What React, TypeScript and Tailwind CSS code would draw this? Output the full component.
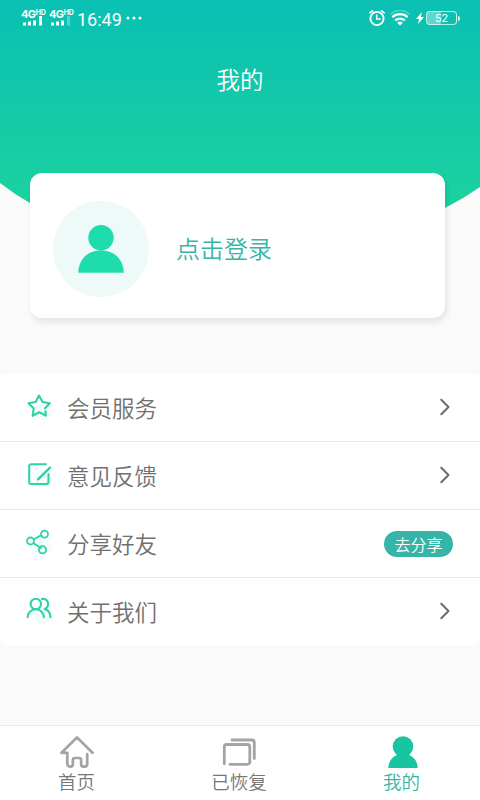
import type { ReactNode } from 'react';

const cjk = "font-['Noto_Sans_CJK_SC',sans-serif]";

function SignalIcon({ weak = false }: { weak?: boolean }) {
  return (
    <div className="flex w-[24px] flex-col text-white">
      <div className="flex h-[10px] items-start font-['Inter','Liberation_Sans',sans-serif] font-bold">
        <span className="text-[11px] leading-[10px] tracking-[-0.7px]">4G</span>
        <span className="ml-[0.5px] text-[7px] leading-[7px] tracking-[-0.4px]">HD</span>
      </div>
      <svg viewBox="0 0 24 11" className="-mt-[4px] h-[11px] w-[24px]" fill="white">
        <rect x="2" y="7.5" width="3" height="3" />
        <rect x="7" y="6.5" width="3" height="4" />
        <rect x="12" y="5.5" width="3" height="5" />
        <rect x="18" y="1" width="3" height="9.5" opacity={weak ? 0.3 : 1} />
      </svg>
    </div>
  );
}

function StatusBar() {
  return (
    <div className="flex h-[36px] items-center justify-between pl-[21px] pr-[20px] text-white">
      <div className="flex items-center">
        <div className="mb-[2px] flex gap-[4px]">
          <SignalIcon />
          <SignalIcon weak />
        </div>
        <span className="ml-[4px] pt-[3px] font-['Roboto',sans-serif] text-[18px] font-normal leading-[20px]">16:49</span>
        <svg viewBox="0 0 16 4" className="ml-[4px] h-[4px] w-[16px]" fill="white">
          <circle cx="2" cy="2" r="1.5" />
          <circle cx="8" cy="2" r="1.5" />
          <circle cx="14" cy="2" r="1.5" />
        </svg>
      </div>
      <div className="flex items-center">
        <svg viewBox="0 0 18 18" className="h-[18px] w-[18px]" fill="none" stroke="white" strokeLinecap="round">
          <circle cx="9" cy="9.5" r="6.6" strokeWidth="1.9" />
          <path d="M8.7 6v4h3.5" strokeWidth="1.4" />
          <path d="M1.8 3.8l2.6-2M16.2 3.8l-2.6-2" strokeWidth="1.6" />
        </svg>
        <svg viewBox="0 0 22 18" className="ml-[3px] h-[18px] w-[22px]" fill="none" stroke="white" strokeWidth="2.2">
          <path d="M1.5 5.2a14 14 0 0 1 19 0" opacity="0.3" strokeWidth="1.5" />
          <path d="M3.3 8.2a11.3 11.3 0 0 1 15.4 0" />
          <path d="M6.2 11.5a7 7 0 0 1 9.6 0" />
          <path d="M11 16.6l-2.8-2.8a4.2 4.2 0 0 1 5.6 0z" fill="white" stroke="none" />
        </svg>
        <svg viewBox="0 0 8 12" className="ml-[5px] h-[12px] w-[8px]" fill="white">
          <path d="M6 0L0 7h3.2L2 12l6-7H4.8z" />
        </svg>
        <div className="ml-[2px] flex h-[14px] w-[31px] items-center justify-center rounded-[4px] border border-white/70 bg-gradient-to-r from-white/35 from-50% to-transparent to-50%">
          <span className="font-['Roboto',sans-serif] text-[11.5px] font-normal leading-[12px]">52</span>
        </div>
        <div className="ml-px h-[5px] w-[2px] rounded-r bg-white/80" />
      </div>
    </div>
  );
}

function Chevron() {
  return (
    <svg viewBox="0 0 10 18" className="mb-[2px] mr-[30px] h-[18px] w-[10px]" fill="none" stroke="#6b6b6b" strokeWidth="2" strokeLinecap="round" strokeLinejoin="round">
      <path d="M1.3 1.7L8.5 9l-7.2 7.3" />
    </svg>
  );
}

function Glyph({ children }: { children: ReactNode }) {
  return (
    <svg viewBox="0 0 28 28" className="mb-[3px] h-[28px] w-[28px]" fill="none" stroke="#2ed3a8" strokeWidth="2.1" strokeLinecap="round" strokeLinejoin="round">
      <circle cx="18" cy="19" r="9" fill="#f2fdf9" stroke="none" />
      {children}
    </svg>
  );
}

const rows: { label: string; icon: ReactNode; share?: boolean }[] = [
  {
    label: '会员服务',
    icon: (
      <path d="M20.4 19.3L20.8 23.6L14.2 20.3L7.6 23.8L8.7 16.3L3.5 11.2L10.7 10L14 3.5L17.5 10L24.9 11.2L20 16.3" />
    ),
  },
  {
    label: '意见反馈',
    icon: (
      <>
        <path d="M20.8 4.2H6.2a2 2 0 0 0-2 2v15.8a2 2 0 0 0 2 2h15.3a2 2 0 0 0 2-2v-8" />
        <path d="M13 19.4L25 7.6" strokeWidth="2.4" />
      </>
    ),
  },
  {
    label: '分享好友',
    share: true,
    icon: (
      <g strokeWidth="1.8">
        <path d="M8.9 11.3l7.5-4.2M8.6 15.3l7.5 5" />
        <circle cx="5.5" cy="13" r="3.5" />
        <circle cx="19.5" cy="6.1" r="3.5" />
        <circle cx="17.5" cy="21.8" r="3.6" />
      </g>
    ),
  },
  {
    label: '关于我们',
    icon: (
      <>
        <circle cx="10.8" cy="8" r="5.2" />
        <path d="M2.6 21.3c.2-4.6 3.8-8 8.2-8s7.9 3.4 8.1 8" />
        <path d="M17 2.9c6.8-.6 8.2 7.5 2.6 10.2 3.4 1 5.7 4.3 5.9 8.2" />
      </>
    ),
  },
];

const tabs: { label: string; active?: boolean; icon: ReactNode }[] = [
  {
    label: '首页',
    icon: (
      <svg viewBox="0 0 36 34" className="h-[34px] w-[36px]" fill="none" stroke="#a4a4a4" strokeWidth="2.7" strokeLinecap="round" strokeLinejoin="round">
        <path d="M33.5 18.8L18 3.4 2.5 18.8h5.8v11.2a2.6 2.6 0 0 0 2.6 2.6h.7a2.3 2.3 0 0 0 2.3-2.3v-4.5a1.8 1.8 0 0 1 1.8-1.8h4.6a1.8 1.8 0 0 1 1.8 1.8v4.5a2.3 2.3 0 0 0 2.3 2.3h1.2a2.6 2.6 0 0 0 2.6-2.6V20.2" />
      </svg>
    ),
  },
  {
    label: '已恢复',
    icon: (
      <svg viewBox="0 0 36 34" className="h-[34px] w-[36px]" fill="none" stroke="#a4a4a4" strokeWidth="2.8" strokeLinecap="round" strokeLinejoin="round">
        <path d="M3.3 29.8V13a2.5 2.5 0 0 1 2.5-2.5h20.5a2.5 2.5 0 0 1 2.5 2.5v15a2.3 2.3 0 0 1-2.3 2.3H9" />
        <path d="M11 6h20a2.3 2.3 0 0 1 2.3 2.3v16.2" />
      </svg>
    ),
  },
  {
    label: '我的',
    active: true,
    icon: (
      <svg viewBox="0 0 36 34" className="h-[34px] w-[36px]" fill="#17c6a0">
        <circle cx="19" cy="12.6" r="10.3" />
        <path d="M4.3 34c.3-7 4-11.500 9-13.300h11.400c5 1.800 8.700 6.300 9 13.300z" />
      </svg>
    ),
  },
];

export default function App() {
  return (
    <div className={`${cjk} relative isolate flex h-[800px] w-[480px] flex-col overflow-hidden bg-[#fafafa] font-[350]`}>
      {/* Curved header backdrop */}
      <svg viewBox="0 0 480 270" className="absolute left-0 top-0 -z-10 h-[270px] w-[480px]">
        <defs>
          <linearGradient id="header" x1="0" y1="0" x2="0" y2="1">
            <stop offset="0" stopColor="#09c0b3" />
            <stop offset="0.78" stopColor="#1bd2a0" />
          </linearGradient>
        </defs>
        <path d="M0 0H480V187Q463 199 445 208Q340 263 240 263Q135 263 30 203Q14 194 0 183Z" fill="url(#header)" />
      </svg>

      <StatusBar />
      <h1 className="mt-[25px] text-center text-[23.5px] leading-[36px] text-white">我的</h1>

      {/* Login card */}
      <div className="ml-[30px] mt-[76px] flex h-[145px] w-[415px] shrink-0 items-center rounded-[12px] bg-white pl-[23px] pt-[7px] shadow-[2px_4px_6px_rgba(0,0,0,0.09)]">
        <div className="flex h-[96px] w-[96px] items-center justify-center rounded-full bg-[#eefaf7]">
          <svg viewBox="0 0 46 48" className="h-[48px] w-[46px]" fill="#1fdcac">
            <circle cx="23" cy="12.8" r="12.7" />
            <path d="M0.3 47.8C0.3 34 10.5 25.2 23 25.2S45.7 34 45.7 47.8z" />
          </svg>
        </div>
        <span className="mb-[2px] ml-[27px] text-[24px] leading-[36px] text-[#35b5a5]">点击登录</span>
      </div>

      {/* Menu */}
      <ul className="mt-[56px] overflow-hidden rounded-[6px] bg-white">
        {rows.map((row) => (
          <li key={row.label} className="flex h-[68px] items-center justify-between border-b border-[#e8e8e8] pl-[25px] last:h-[67px] last:border-b-0">
            <div className="flex items-center">
              <Glyph>{row.icon}</Glyph>
              <span className="mb-[2px] ml-[14px] text-[22.5px] leading-[34px] text-[#707070]">{row.label}</span>
            </div>
            {row.share ? (
              <span className="mr-[27px] flex h-[26px] w-[69px] items-center justify-center rounded-full bg-[#35b5a8] text-[16px] text-white">
                去分享
              </span>
            ) : (
              <Chevron />
            )}
          </li>
        ))}
      </ul>

      {/* Tab bar */}
      <nav className="mt-auto flex h-[75px] justify-between border-t border-[#ebebeb] bg-white pl-[40px] pr-[42px]">
        {tabs.map((tab) => (
          <div key={tab.label} className="flex w-[73px] flex-col items-center pt-[8px]">
            {tab.icon}
            <span className={`whitespace-nowrap text-[18.5px] leading-[26px] ${tab.active ? 'text-[#35b5a5]' : 'text-[#777]'}`}>
              {tab.label}
            </span>
          </div>
        ))}
      </nav>
    </div>
  );
}
